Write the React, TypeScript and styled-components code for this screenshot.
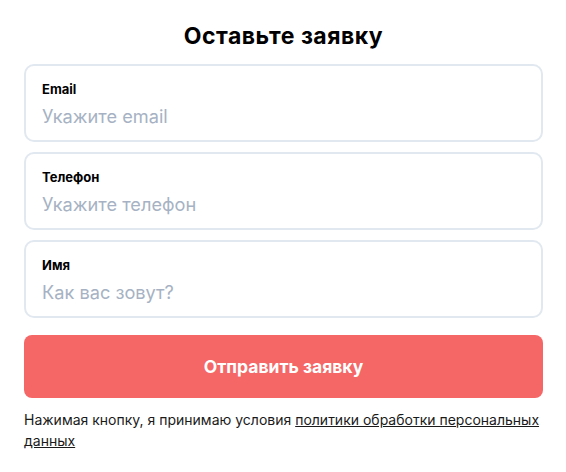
import * as React from 'react'
import styled, { createGlobalStyle } from 'styled-components'

const GlobalStyle = createGlobalStyle`
body {
  margin: 0;
  background: #ffffff;
  font-family: Inter, "Noto Sans", sans-serif;
}
`

const Form = styled.form`
display: flex;
flex-direction: column;
padding: 22px 23px 0 24px;
`

const Title = styled.h2`
margin: 0 0 14px;
text-align: center;
font-size: 23px;
font-weight: 700;
line-height: 28px;
letter-spacing: 0.5px;
color: #000;
`

const Fields = styled.div`
display: flex;
flex-direction: column;
gap: 10px;
`

const Field = styled.label`
display: flex;
flex-direction: column;
gap: 7px;
height: 78px;
box-sizing: border-box;
padding: 15px 16px 0;
border: 2px solid #e2e8f0;
border-radius: 10px;
background: #fff;
`

const Label = styled.span`
font-size: 13px;
font-weight: 700;
line-height: 16px;
color: #000;
`

const Input = styled.input`
border: none;
outline: none;
padding: 0;
font-family: inherit;
font-size: 18.2px;
line-height: 24px;
color: #1a202c;
background: transparent;
&::placeholder {
  color: #a6b2c3;
}
`

const SubmitButton = styled.button`
margin-top: 17px;
height: 63px;
border: none;
border-radius: 8px;
background: #f56666;
color: #fff;
font-family: inherit;
font-size: 17.5px;
font-weight: 700;
cursor: pointer;
`

const Note = styled.p`
margin: 11px 0 0;
font-size: 14px;
line-height: 21px;
color: #1a1a1a;
a {
  color: inherit;
  text-decoration: underline;
}
`

const fields = [
  { name: 'email', label: 'Email', placeholder: 'Укажите email' },
  { name: 'phone', label: 'Телефон', placeholder: 'Укажите телефон' },
  { name: 'name', label: 'Имя', placeholder: 'Как вас зовут?' },
]

export default function App() {
  return (
    <>
      <GlobalStyle />
      <Form onSubmit={e => e.preventDefault()}>
        <Title>Оставьте заявку</Title>
        <Fields>
          {fields.map(f => (
            <Field key={f.name}>
              <Label>{f.label}</Label>
              <Input name={f.name} placeholder={f.placeholder} />
            </Field>
          ))}
        </Fields>
        <SubmitButton type="submit">Отправить заявку</SubmitButton>
        <Note>
          Нажимая кнопку, я принимаю условия <a href="#">политики обработки персональных данных</a>
        </Note>
      </Form>
    </>
  )
}
